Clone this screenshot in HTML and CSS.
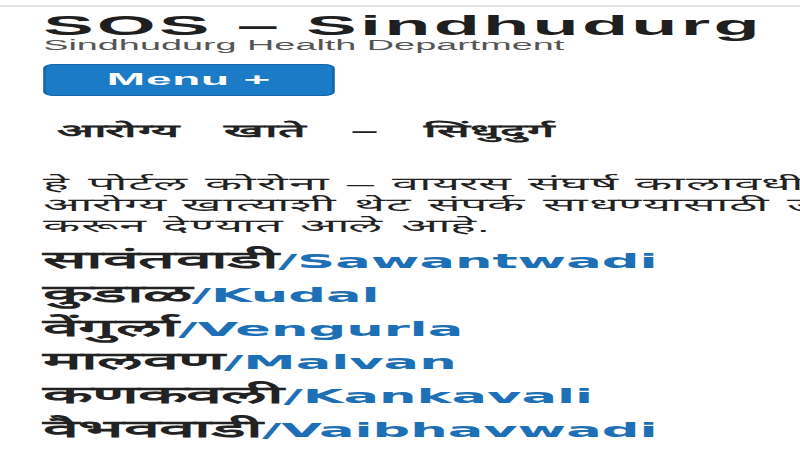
FILE: index.html
```html
<!DOCTYPE html>
<html lang="mr">
<head>
<meta charset="utf-8">
<title>SOS – Sindhudurg</title>
<link rel="stylesheet" href="styles.css">
</head>
<body>
<div class="topline"></div>
<div class="page">
  <header class="site-header">
    <h1 class="site-title">SOS – Sindhudurg</h1>
    <p class="site-desc">Sindhudurg Health Department</p>
    <button class="menu-btn" type="button">Menu +</button>
  </header>
  <main class="content">
    <h2 class="dept-title">आरोग्य खाते – सिंधुदुर्ग</h2>
    <p class="intro">हे पोर्टल कोरोना – वायरस संघर्ष कालावधीत नागरिकांना<br>आरोग्य खात्याशी थेट संपर्क साधण्यासाठी उपलब्ध<br>करून देण्यात आले आहे.</p>
    <ul class="talukas">
      <li><span class="mr">सावंतवाडी</span><a href="#">/Sawantwadi</a></li>
      <li><span class="mr">कुडाळ</span><a href="#">/Kudal</a></li>
      <li><span class="mr">वेंगुर्ला</span><a href="#">/Vengurla</a></li>
      <li><span class="mr">मालवण</span><a href="#">/Malvan</a></li>
      <li><span class="mr">कणकवली</span><a href="#">/Kankavali</a></li>
      <li><span class="mr">वैभववाडी</span><a href="#">/Vaibhavwadi</a></li>
    </ul>
  </main>
</div>
</body>
</html>
```
FILE: styles.css
```css
html, body {
  margin: 0;
  padding: 0;
  background: #ffffff;
  overflow: hidden;
  width: 800px;
  height: 450px;
}
body {
  font-family: "Liberation Sans", Arial, sans-serif;
  color: #222222;
}
.topline {
  margin-top: 5px;
  height: 2px;
  background: #e2e2e2;
}
.page {
  width: 420px;
  padding-left: 16px;
  transform: scaleX(2.7);
  transform-origin: 0 0;
}
.site-header {
  display: flex;
  flex-direction: column;
  align-items: flex-start;
}
.site-title {
  margin: 6px 0 0;
  font-size: 28px;
  line-height: 25px;
  font-weight: bold;
  letter-spacing: 1.2px;
  color: #1f1f1f;
}
.site-desc {
  margin: 0;
  font-size: 14px;
  line-height: 14px;
  color: #555555;
}
.menu-btn {
  margin-top: 12px;
  width: 108px;
  height: 32px;
  padding: 0;
  border: 1px solid #1565a8;
  border-radius: 4px;
  background: #1b7bc6;
  color: #ffffff;
  font-family: "Liberation Sans", Arial, sans-serif;
  font-size: 17px;
  font-weight: bold;
  letter-spacing: 0.3px;
}
.content {
  padding-top: 22px;
}
.dept-title {
  margin: 0 0 0 5px;
  font-size: 18px;
  line-height: 26px;
  font-weight: bold;
  word-spacing: 12px;
}
.intro {
  margin: 30px 0 0;
  font-size: 18px;
  line-height: 21px;
  word-spacing: 1.5px;
  white-space: nowrap;
}
.talukas {
  list-style: none;
  margin: 8px 0 0;
  padding: 0;
}
.talukas li {
  font-size: 20px;
  line-height: 33.8px;
  font-weight: bold;
  white-space: nowrap;
}
.talukas .mr {
  font-size: 24px;
  line-height: 20px;
}
.talukas a {
  font-family: "DejaVu Sans", Verdana, sans-serif;
  font-size: 19.5px;
  line-height: 20px;
  color: #1d6fb6;
  text-decoration: none;
}
```
